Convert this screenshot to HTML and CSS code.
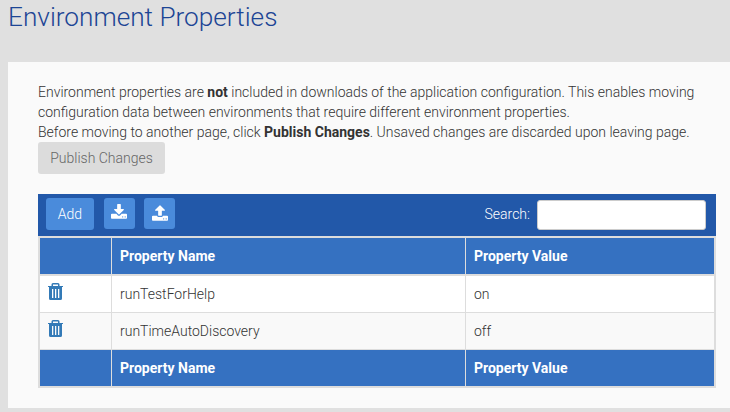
FILE: index.html
```html
<!DOCTYPE html>
<html lang="en">
<head>
<meta charset="utf-8">
<title>Environment Properties</title>
<link rel="stylesheet" href="styles.css">
</head>
<body>
<svg class="sprite" aria-hidden="true">
  <symbol id="trash" viewBox="0 0 15 17">
    <path fill-rule="evenodd" d="M0 3H3.500V1.500Q3.500 0 5 0H10Q11.500 0 11.500 1.500V3H15V4H14V15.500Q14 17 12.500 17H2.500Q1 17 1 15.500V4H0zM5 3H10V1.500H5zM4 6V15H5.300V6zM7 6V15H8.300V6zM10 6V15H11.300V6z"/>
  </symbol>
</svg>
<h1 class="title">Environment Properties</h1>
<main class="card">
  <p class="intro">Environment properties are <b>not</b> included in downloads of the application configuration. This enables moving configuration data between environments that require different environment properties.<br>Before moving to another page, click <b>Publish Changes</b>. Unsaved changes are discarded upon leaving page.</p>
  <button class="publish" disabled>Publish Changes</button>
  <div class="toolbar">
    <button class="btn add">Add</button>
    <button class="btn icon" aria-label="Download"><svg viewBox="64 0 1664 1664"><path d="M1344 1344q0-26-19-45t-45-19-45 19-19 45 19 45 45 19 45-19 19-45zm256 0q0-26-19-45t-45-19-45 19-19 45 19 45 45 19 45-19 19-45zm128-224v320q0 40-28 68t-68 28h-1472q-40 0-68-28t-28-68v-320q0-40 28-68t68-28h465l135 136q58 56 136 56t136-56l136-136h464q40 0 68 28t28 68zm-325-569q17 41-14 70l-448 448q-18 19-45 19t-45-19l-448-448q-31-29-14-70 17-39 59-39h256v-448q0-26 19-45t45-19h256q26 0 45 19t19 45v448h256q42 0 59 39z"/></svg></button>
    <button class="btn icon upload" aria-label="Upload"><svg viewBox="64 32 1664 1664"><path d="M1344 1472q0-26-19-45t-45-19-45 19-19 45 19 45 45 19 45-19 19-45zm256 0q0-26-19-45t-45-19-45 19-19 45 19 45 45 19 45-19 19-45zm128-224v320q0 40-28 68t-68 28h-1472q-40 0-68-28t-28-68v-320q0-40 28-68t68-28h427q21 56 70.500 92t110.500 36h256q61 0 110.500-36t70.500-92h427q40 0 68 28t28 68zm-325-648q-17 40-59 40h-256v448q0 26-19 45t-45 19h-256q-26 0-45-19t-19-45v-448h-256q-42 0-59-40-17-39 14-69l448-448q18-19 45-19t45 19l448 448q31 30 14 69z"/></svg></button>
    <label class="search"><span>Search:</span><input type="text"></label>
  </div>
  <div class="table">
    <div class="row head"><div></div><div>Property Name</div><div>Property Value</div></div>
    <div class="row"><div><svg class="trash"><use href="#trash"/></svg></div><div>runTestForHelp</div><div>on</div></div>
    <div class="row alt"><div><svg class="trash"><use href="#trash"/></svg></div><div>runTimeAutoDiscovery</div><div>off</div></div>
    <div class="row head"><div></div><div>Property Name</div><div>Property Value</div></div>
  </div>
</main>
</body>
</html>
```
FILE: styles.css
```css
* { box-sizing: border-box; }
body {
  margin: 0;
  height: 412px;
  overflow: hidden;
  background: #e0e0e0;
  color: #333;
  font: 300 14px/20px Roboto, sans-serif;
}
.sprite { display: none; }
.title {
  margin: 0;
  height: 62px;
  padding: 2px 0 0 8px;
  color: #1c4595;
  font-size: 26.2px;
  font-weight: 300;
  line-height: 30px;
}
.card {
  height: 346px;
  margin-left: 8px;
  padding: 20px 14px 0 30px;
  background: #fafafa;
}
.intro { margin: 0; width: 678px; }
.intro b { font-weight: 700; }
button { border: 0; font: inherit; }
.publish {
  display: block;
  width: 127px;
  height: 32px;
  padding: 0;
  border-radius: 3px;
  background: #dcdcdc;
  color: #666;
}
.toolbar {
  display: flex;
  align-items: flex-start;
  gap: 9px;
  height: 42px;
  margin-top: 20px;
  padding: 4px 10px 0 8px;
  background: #2258a9;
  color: #fff;
}
.btn {
  padding: 0;
  border-radius: 3px;
  background: #4a8bdb;
  color: #fff;
}
.add { width: 48px; height: 32px; margin-right: 1px; }
.icon { width: 31px; height: 31px; display: flex; padding: 6px 0 0 7px; }
.icon.upload { padding: 7px 0 0 8px; }
.icon svg { width: 16px; height: 16px; fill: #fff; }
.search {
  display: flex;
  align-items: center;
  gap: 7px;
  height: 30px;
  margin: 2px 0 0 auto;
}
.search span { padding-bottom: 2px; }
.search input {
  width: 169px;
  height: 30px;
  padding: 0 6px;
  border: 1px solid #ccc;
  border-radius: 3px;
  background: #fff;
}
.table {
  width: 678px;
  border: 2px solid #ddd;
}
.row {
  display: grid;
  grid-template-columns: 72px 354px 248px;
  height: 37px;
  border-bottom: 1px solid #ddd;
  background: #fff;
}
.row > div { padding: 8px 8px 0; border-right: 1px solid #ddd; }
.row > div:last-child { border-right: 0; }
.row.head { background: #3571c1; color: #fff; font-weight: 700; }
.row.head:first-child { height: 38px; border-bottom-width: 2px; }
.row.head:last-child { height: 36px; border-bottom: 0; }
.row.alt { background: #f9f9f9; }
.trash { display: block; width: 15px; height: 17px; fill: #337ab7; margin-top: -1px; }
```
